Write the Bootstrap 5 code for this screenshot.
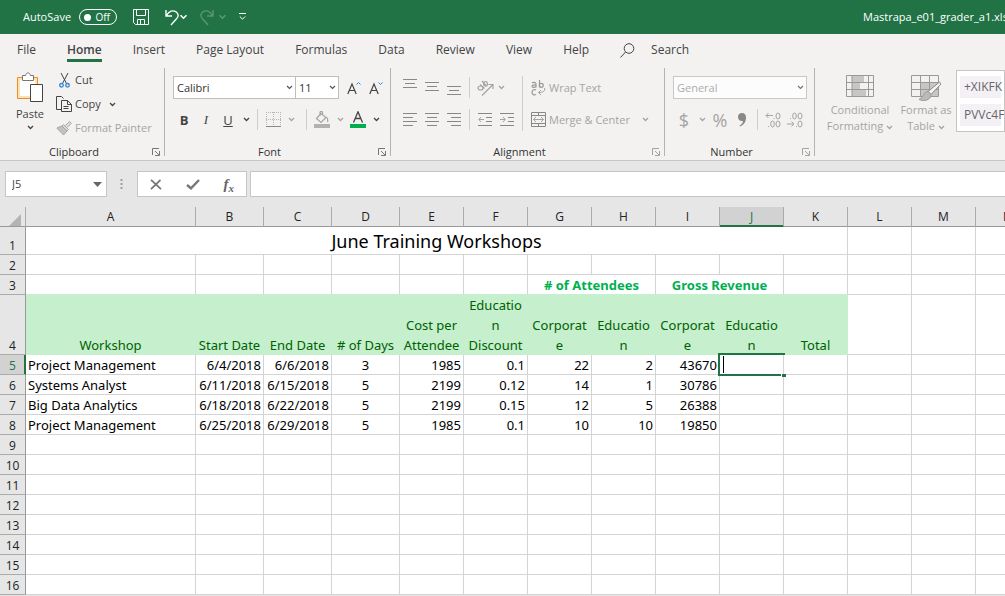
<!DOCTYPE html>
<html lang="en">
<head>
<meta charset="utf-8">
<meta name="viewport" content="width=device-width, initial-scale=1">
<title>Mastrapa_e01_grader_a1.xlsx</title>
<link href="https://cdn.jsdelivr.net/npm/bootstrap@5.3.0/dist/css/bootstrap.min.css" rel="stylesheet">
<style>
  body { font: 11px/14px "Open Sans", "Noto Sans", sans-serif; color: #444; background: #e6e6e6; }
  button { font: inherit; color: inherit; background: none; border: 0; padding: 0; }
  svg { display: block; flex: none; fill: none; stroke: currentColor; }
  .titlebar { height: 34px; background: #217346; color: #fff; padding-left: 23px; }
  .autosave { width: 38px; height: 16px; border: 1px solid #fff; border-radius: 8px; padding: 0 6px 0 4px; font-size: 10px; }
  .autosave::before { content: ""; width: 7px; height: 7px; border-radius: 50%; background: #fff; }
  .doc-title { width: 142px; white-space: nowrap; overflow: hidden; }
  .tabs { height: 34px; background: #f3f2f1; padding: 5px 0 0 17px; gap: 31px; font-size: 12px; line-height: 18px; }
  .tabs a { color: #444; text-decoration: none; border-bottom: 3px solid transparent; padding-top: 2px; }
  .tabs a.current { border-color: #217346; font-weight: 600; }
  .ribbon { height: 93px; background: #f3f2f1; border-bottom: 1px solid #c8c6c4; overflow: hidden; }
  .rgroup { flex: none; height: 92px; }
  .rule { width: 1px; flex: none; background: #b5b3b1; height: 88px; }
  .rule-in { width: 1px; flex: none; background: #cfcdcb; height: 21px; }
  .glabel { height: 16px; line-height: 16px; color: #333; }
  .launch { width: 16px; height: 16px; display: grid; place-items: center; color: #777; }
  .rrow { height: 23px; display: flex; align-items: center; }
  .rrow + .rrow { margin-top: 9px; }
  .tool { width: 22px; height: 22px; flex: none; display: grid; place-items: center; }
  .chev { height: 22px; flex: none; display: grid; place-items: center; }
  .off { color: #a6a4a2; }
  .biu { font-size: 13px; }
  .numsign { font-size: 18px; }
  .pick { height: 23px; border: 1px solid #c0bebc; border-radius: 0; padding: 0 12px 0 3px; color: #333; font-size: 11px; line-height: 20px; appearance: none;
    background: #fff url("data:image/svg+xml,%3Csvg xmlns='http://www.w3.org/2000/svg' width='7' height='5'%3E%3Cpath d='M1 1l2.5 2.5L6 1' fill='none' stroke='%23555' stroke-width='1.2'/%3E%3C/svg%3E") no-repeat right 2px center; }
  .pick:disabled { color: #999; opacity: .8; }
  .paste { width: 46px; margin-left: 7px; gap: 4px; padding-top: 4px; }
  .big { line-height: 16px; padding-top: 4px; }
  .gallery { border: 1px solid #c6c4c2; background: #fff; height: 62px; margin: 2px 0 0 1px; padding: 5px 3px; font-size: 12px; color: #666; white-space: nowrap; overflow: hidden; }
  .gallery button { display: block; width: 100%; height: 22px; background: #f4f1f6; padding-left: 4px; text-align: left; }
  .gallery button + button { margin-top: 6px; }
  .fbar { height: 46px; padding: 10px 0 10px 5px; }
  .fbox { height: 26px; border: 1px solid #c6c6c6; background: #fff; }
  .fbox input { border: 0; background: none; outline: 0; padding: 0 0 0 6px; min-width: 0; color: #444; }
  .grip { margin: 0 14px 0 13px; }
  .fx { font: italic bold 15px/20px "Liberation Serif", serif; color: #666; }
  .fx sub { font-size: 11px; }
  .formula { border-right: 0; outline: 0; border-radius: 0; margin-left: 3px; }
  .sheet { overflow: hidden; min-height: 0; }
  .cells { table-layout: fixed; border-collapse: separate; border-spacing: 0; font: 13px/17px "Noto Sans", sans-serif; color: #000; background: #fff; }
  .cells th, .cells td { padding: 2px 2px 0; height: 20px; border: 0 solid #d4d4d4; border-width: 0 1px 1px 0; vertical-align: bottom; white-space: nowrap; }
  .cells th { font: 12px/17px "Open Sans", sans-serif; text-align: center; background: #e6e6e6; border-color: #ababab; color: #222; }
  .cells thead th { border-bottom-color: #999; padding: 0; line-height: 19px; }
  .cells tbody th { border-right-color: #999; padding-left: 0; padding-right: 0; }
  .cells .here { background: #d2d2d2; color: #217346; }
  .cells thead .here { box-shadow: inset 0 -1px #217346; border-bottom-color: #217346; }
  .cells tbody .here { box-shadow: inset -1px 0 #217346; border-right-color: #217346; }
  .cells .sheet-title { height: 28px; font-size: 18px; line-height: 25px; text-align: center; }
  .cells .over td:nth-child(-n+10) { border-bottom-color: #c6efce; }
  .cells .over .grp { color: #00b050; font-weight: bold; text-align: center; }
  .cells .heads td { height: 60px; }
  .cells .heads .hd { background: #c6efce; border: 0; color: #006100; text-align: center; padding: 0 3px 0 2px; line-height: 20px; white-space: normal; overflow-wrap: anywhere; }
  .cells .num { text-align: right; }
  .cursor-cell { position: relative; }
  .cursor-cell::before { content: ""; position: absolute; inset: -2px; border: 2px solid #217346; border-right: 0; }
  .cursor-cell::after { content: ""; position: absolute; right: -3px; bottom: -3px; width: 5px; height: 3px; background: #217346; border-left: 1px solid #fff; }
  .caret { position: absolute; left: 3px; top: 1px; width: 1px; height: 17px; background: #000; }
</style>
</head>
<body class="d-flex flex-column vh-100 overflow-hidden">

<svg width="0" height="0" class="position-absolute" aria-hidden="true">
  <symbol id="chev" viewBox="0 0 7 5"><path d="M1 1l2.5 2.5L6 1" stroke-width="1.3"/></symbol>
  <symbol id="launch" viewBox="0 0 8 8"><path d="M.5 7V.5H7M3 3l4 4M7.500 3v4.500H3"/></symbol>
</svg>

<header class="titlebar d-flex align-items-center flex-shrink-0">
  <span>AutoSave</span>
  <button class="autosave d-flex align-items-center justify-content-between ms-2" aria-pressed="false">Off</button>
  <button class="ms-3" aria-label="Save"><svg width="16" height="16" viewBox="0 0 16 16"><path d="M.5.5h15v15h-13l-2-2zM3.500 .5v6h9v-6M4.500 15.500v-5h7v5M7.500 11v4"/></svg></button>
  <button class="ms-3" aria-label="Undo"><svg width="14" height="17" viewBox="0 0 14 17"><path stroke-width="1.400" d="M1 1v6h6M1.500 6.500C4 2 8 .8 11 2.800c3 2.200 2.600 5 .5 7L6 16"/></svg></button>
  <button class="chev" aria-label="Undo list"><svg width="9" height="6"><use href="#chev"/></svg></button>
  <span class="d-flex align-items-center ms-2 ps-1 opacity-25">
    <button aria-label="Redo" disabled><svg width="14" height="17" viewBox="0 0 14 17"><path stroke-width="1.400" d="M13 1v6H7M12.500 6.500C10 2 6 .8 3 2.800c-3 2.200-2.600 5-.5 7L8 16"/></svg></button>
    <button class="chev ms-1" aria-label="Redo list" disabled><svg width="9" height="6"><use href="#chev"/></svg></button>
  </span>
  <button class="ms-2 ps-1" aria-label="Customize toolbar"><svg width="7" height="8" viewBox="0 0 7 8"><path d="M0 .5h7M.8 3.500l2.700 2.700 2.700-2.700"/></svg></button>
  <span class="doc-title ms-auto">Mastrapa_e01_grader_a1.xls</span>
</header>

<nav class="tabs d-flex align-items-start flex-shrink-0">
  <a href="#">File</a><a href="#" class="current">Home</a><a href="#">Insert</a><a href="#">Page Layout</a><a href="#">Formulas</a><a href="#">Data</a><a href="#">Review</a><a href="#">View</a><a href="#">Help</a>
  <a href="#" class="d-flex align-items-center"><svg width="15" height="15" viewBox="0 0 15 15" class="me-3"><circle cx="9" cy="5.500" r="4.800"/><path d="M5.600 9L.5 14.500"/></svg>Search</a>
</nav>

<div class="ribbon d-flex flex-shrink-0">
  <section class="rgroup d-flex flex-column" style="width:164px">
    <div class="d-flex">
      <button class="paste d-flex flex-column align-items-center">
        <svg width="28" height="31" viewBox="0 0 28 31"><path d="M1.500 5.500h20v21h-20z" fill="#fbe3b0" stroke="#f08b2c"/><path d="M4 8h15v16H4z" fill="#fff" stroke="none"/><path d="M6.500 8.500v-5h3.200C9.900 0 14.100 0 14.300 3.500h3.200v5z" fill="#fff" stroke="#777"/><path d="M14.500 12.500h12v17h-12z" fill="#fff" stroke="#444"/></svg>
        <span>Paste</span>
        <svg width="7" height="5"><use href="#chev"/></svg>
      </button>
      <div class="d-flex flex-column">
        <button class="d-flex align-items-center" style="height:24px"><span class="tool"><svg width="11" height="15" viewBox="0 0 11 15"><path d="M2 0l5.500 10.500M9 0L3.500 10.500"/><g stroke="#2b88d8" stroke-width="1.300"><circle cx="2.500" cy="12.300" r="1.800"/><circle cx="8.500" cy="12.300" r="1.800"/></g></svg></span>Cut</button>
        <button class="d-flex align-items-center" style="height:24px"><span class="tool"><svg width="16" height="16" viewBox="0 0 16 16"><path d="M5 13.500H.5V.5h5l2 2M5.500 4.500h6l4 4v7h-10zM11.500 4.500v4h4M7.500 10.500h5M7.500 12.500h5"/></svg></span>Copy<svg width="7" height="5" class="ms-2"><use href="#chev"/></svg></button>
        <button class="d-flex align-items-center off" style="height:24px" disabled><span class="tool"><svg width="16" height="15" viewBox="0 0 16 15"><path d="M9.500 4.500L13.500.5l1.800 1.800-4 4M7.500 3.500l5 5-1.500 1.500-5-5z" fill="#ddd"/><path d="M6 5L.8 7l6.700 7 3.500-4z" fill="#c4c2c0"/></svg></span>Format Painter</button>
      </div>
    </div>
    <div class="glabel d-flex mt-auto"><span class="flex-fill text-center">Clipboard</span><button class="launch" aria-label="Clipboard options"><svg width="8" height="8"><use href="#launch"/></svg></button></div>
  </section>
  <div class="rule"></div>

  <section class="rgroup d-flex flex-column" style="width:225px">
    <div class="pt-2 ps-2">
      <div class="rrow">
        <select class="pick" style="width:123px" aria-label="Font"><option>Calibri</option></select><select class="pick border-start-0" style="width:43px" aria-label="Font size"><option>11</option></select>
        <button class="tool ms-1" aria-label="Grow font"><svg width="14" height="14" viewBox="0 0 14 14"><path stroke-width="1.200" d="M.8 13L5 3l4.200 10M2.300 9.500h5.400"/><path stroke="#2b88d8" d="M9.500 3.500L11.500 1.500l2 2"/></svg></button>
        <button class="tool" aria-label="Shrink font"><svg width="14" height="14" viewBox="0 0 14 14"><path stroke-width="1.200" d="M.8 13L5 3l4.200 10M2.300 9.500h5.400"/><path stroke="#2b88d8" d="M9.500 1.500l2 2 2-2"/></svg></button>
      </div>
      <div class="rrow">
        <button class="tool biu fw-bold">B</button><button class="tool biu fst-italic" style="font-family:'Liberation Serif',serif">I</button><button class="tool biu text-decoration-underline">U</button>
        <button class="chev" style="width:14px" aria-label="Underline styles"><svg width="7" height="5"><use href="#chev"/></svg></button>
        <span class="rule-in ms-1"></span>
        <span class="d-flex off ms-1"><button class="tool" aria-label="Borders" disabled><svg width="15" height="15" viewBox="0 0 15 15"><path stroke-dasharray="1 1" stroke="#b8b6b4" d="M.5 0v14M7.500 0v14M14.500 0v14M0 .5h15M0 7.500h15"/><path stroke="#888" d="M0 14.500h15"/></svg></button><button class="chev" style="width:14px" aria-label="Border styles" disabled><svg width="7" height="5"><use href="#chev"/></svg></button></span>
        <span class="rule-in ms-2"></span>
        <span class="d-flex off ms-1"><button class="tool" aria-label="Fill color" disabled><svg width="16" height="17" viewBox="0 0 16 17"><path d="M7 2.500L2.500 7.500 7 11.500l5-5zM6 5V1.500C6 0 8.500 0 8.500 1.500V4M12 6c2 1 2 3 1.500 5" stroke-width="1.200"/><path d="M0 13h16v4H0z" fill="#b3b0ad" stroke="none"/></svg></button><button class="chev" style="width:14px" aria-label="Fill colors" disabled><svg width="7" height="5"><use href="#chev"/></svg></button></span>
        <button class="tool" aria-label="Font color"><svg width="16" height="17" viewBox="0 0 16 17"><path stroke-width="1.300" d="M3.500 11.500L8 .8l4.500 10.700M5 7.500h6"/><path d="M0 13h16v4H0z" fill="#00b050" stroke="none"/></svg></button>
        <button class="chev" style="width:14px" aria-label="Font colors"><svg width="7" height="5"><use href="#chev"/></svg></button>
      </div>
    </div>
    <div class="glabel d-flex mt-auto"><span class="flex-fill text-center">Font</span><button class="launch" aria-label="Font options"><svg width="8" height="8"><use href="#launch"/></svg></button></div>
  </section>
  <div class="rule"></div>

  <section class="rgroup d-flex flex-column" style="width:273px">
    <div class="pt-2 ps-2 d-flex off">
      <div>
        <div class="rrow">
          <button class="tool" aria-label="Top align" disabled><svg width="14" height="17" viewBox="0 0 14 17"><path stroke="#888" d="M0 .5h14M2 4.500h10M0 8.500h14"/></svg></button><button class="tool" aria-label="Middle align" disabled><svg width="14" height="17" viewBox="0 0 14 17"><path stroke="#888" d="M0 3.500h14M2 7.500h10M0 11.500h14"/></svg></button><button class="tool" aria-label="Bottom align" disabled><svg width="14" height="17" viewBox="0 0 14 17"><path stroke="#888" d="M0 7.500h14M2 11.500h10M0 15.500h14"/></svg></button>
          <span class="rule-in mx-1"></span>
          <button class="tool" aria-label="Orientation" disabled><svg width="17" height="16" viewBox="0 0 17 16"><g stroke-width="1.200"><ellipse cx="3.500" cy="8" rx="2.500" ry="2"/><path d="M3 4.500l4.500 4M5 1l4 4.500"/><ellipse cx="8.500" cy="3.800" rx="2" ry="2.300"/><path d="M5 15.500L16 4.500M11.500 4.500H16V9"/></g></svg></button>
          <button class="chev" style="width:10px" aria-label="Orientation list" disabled><svg width="7" height="5"><use href="#chev"/></svg></button>
        </div>
        <div class="rrow">
          <button class="tool" aria-label="Align left" disabled><svg width="14" height="13" viewBox="0 0 14 13"><path stroke="#888" d="M0 .5h14M0 4.500h10M0 8.500h14M0 12.500h10"/></svg></button><button class="tool" aria-label="Center" disabled><svg width="14" height="13" viewBox="0 0 14 13"><path stroke="#888" d="M0 .5h14M2 4.500h10M0 8.500h14M2 12.500h10"/></svg></button><button class="tool" aria-label="Align right" disabled><svg width="14" height="13" viewBox="0 0 14 13"><path stroke="#888" d="M0 .5h14M4 4.500h10M0 8.500h14M4 12.500h10"/></svg></button>
          <span class="rule-in mx-1"></span>
          <button class="tool" aria-label="Decrease indent" disabled><svg width="14" height="13" viewBox="0 0 14 13"><path stroke="#888" d="M0 .5h14M8 4.500h6M8 8.500h6M0 12.500h14"/><path d="M6 6.500H1M3 4L.8 6.500 3 9"/></svg></button><button class="tool" aria-label="Increase indent" disabled><svg width="14" height="13" viewBox="0 0 14 13"><path stroke="#888" d="M0 .5h14M8 4.500h6M8 8.500h6M0 12.500h14"/><path d="M0 6.500h5M3 4l2.200 2.500L3 9"/></svg></button>
        </div>
      </div>
      <span class="rule-in mx-1 h-auto"></span>
      <div>
        <div class="rrow"><button class="d-flex align-items-center" disabled><span class="tool"><svg width="15" height="16" viewBox="0 0 15 16"><g stroke-width="1.200" stroke="#999"><path d="M1 3c1-1 4-1 4 1v3.500M5 5c-2-.3-4 0-4 1.300S3.500 8 5 6.500M8.500 0v7.500"/><circle cx="10.300" cy="5.300" r="2"/><path d="M5 10c-2-1-4 0-4 2.300S3 15.500 5 14.500"/></g><path d="M13.500 8c1 3-1 4.500-6 4.500M10 10l-2.500 2.500L10 15"/></svg></span>Wrap Text</button></div>
        <div class="rrow"><button class="d-flex align-items-center" disabled><span class="tool"><svg width="15" height="15" viewBox="0 0 15 15"><path stroke="#888" d="M.5.500h14v14H.5zM.5 3.500h14M.5 11.500h14M7.500 .5v3M7.500 11.500v3"/><path d="M2.500 7.500h10M5 5L2.500 7.500 5 10M10 5l2.500 2.500L10 10"/></svg></span>Merge &amp; Center</button><button class="chev ms-2 ps-1" aria-label="Merge list" disabled><svg width="7" height="5"><use href="#chev"/></svg></button></div>
      </div>
    </div>
    <div class="glabel d-flex mt-auto"><span class="flex-fill text-center">Alignment</span><button class="launch off" aria-label="Alignment options"><svg width="8" height="8"><use href="#launch"/></svg></button></div>
  </section>
  <div class="rule"></div>

  <section class="rgroup d-flex flex-column" style="width:149px">
    <div class="pt-2 ps-2 off">
      <div class="rrow"><select class="pick" style="width:134px" aria-label="Number format" disabled><option>General</option></select></div>
      <div class="rrow">
        <button class="tool numsign" aria-label="Accounting format" disabled>$</button>
        <button class="chev" style="width:14px" aria-label="Currency list" disabled><svg width="7" height="5"><use href="#chev"/></svg></button>
        <button class="tool numsign" aria-label="Percent" disabled>%</button>
        <button class="tool" aria-label="Comma style" disabled><svg width="8" height="14" viewBox="0 0 8 14"><path stroke="none" fill="#888" d="M4 0c2.500 0 4 1.700 4 4.500 0 4-2 7.500-6 9l-.5-1C3.500 11.500 4.800 10 5 8 2 8.500 0 6.500 0 4c0-2.500 1.700-4 4-4z"/></svg></button>
        <span class="rule-in mx-1"></span>
        <button class="tool" aria-label="Increase decimal" disabled><svg width="16" height="16" viewBox="0 0 16 16"><path d="M8 3.500H1M3.500 1L1 3.500 3.500 6M9 6v1M3.500 14v1"/><ellipse cx="13" cy="4" rx="2" ry="3"/><ellipse cx="7.500" cy="12" rx="1.800" ry="3"/><ellipse cx="13" cy="12" rx="2" ry="3"/></svg></button>
        <button class="tool" aria-label="Decrease decimal" disabled><svg width="16" height="16" viewBox="0 0 16 16"><path d="M0 12h7M4.500 9.500L7 12l-2.500 2.500M9.500 14v1M3.500 6v1"/><ellipse cx="13" cy="4" rx="2" ry="3"/><ellipse cx="7.500" cy="4" rx="1.800" ry="3"/><ellipse cx="13" cy="12" rx="2" ry="3"/></svg></button>
      </div>
    </div>
    <div class="glabel d-flex mt-auto"><span class="flex-fill text-center">Number</span><button class="launch off" aria-label="Number options"><svg width="8" height="8"><use href="#launch"/></svg></button></div>
  </section>
  <div class="rule"></div>

  <section class="d-flex flex-fill overflow-hidden">
    <button class="big off d-flex flex-column align-items-center ms-2 flex-shrink-0" style="width:74px" disabled>
      <svg width="28" height="30" viewBox="0 0 28 30"><path fill="#c8c6c4" stroke="none" d="M6 3h12v7H6zM6 10h8v7H6zM6 17h14v7H6z"/><path stroke="#999" d="M.5 3.500h27v21H.5zM6 3.500v21M22.500 3.500v21M.5 10.500h27M.5 17.500h27"/></svg>
      <span>Conditional<br>Formatting <svg class="d-inline-block" width="7" height="5"><use href="#chev"/></svg></span>
    </button>
    <button class="big off d-flex flex-column align-items-center flex-shrink-0" style="width:58px" disabled>
      <svg width="30" height="30" viewBox="0 0 30 30"><path fill="#c8c6c4" stroke="none" d="M10 10h18v14H10z"/><path stroke="#999" d="M.5 3.500h27v21H.5zM9.500 3.500v21M18.500 3.500v21M.5 10.500h27M.5 17.500h27"/><path d="M28.500 10L17 19.500l3 3L30 12z" fill="#f3f2f1" stroke="#888"/><path d="M17 19.500c-4 0-4 5-9 8 5 2 12 1 12-5z" fill="#bbb" stroke="#999"/></svg>
      <span>Format as<br>Table <svg class="d-inline-block" width="7" height="5"><use href="#chev"/></svg></span>
    </button>
    <div class="gallery flex-fill"><button>+XIKFK</button><button>PVVc4F</button></div>
  </section>
</div>

<div class="fbar d-flex align-items-center flex-shrink-0">
  <div class="fbox d-flex align-items-center" style="width:102px"><input class="w-100" value="J5" aria-label="Name box"><button class="px-1" aria-label="Named ranges"><svg width="9" height="5" viewBox="0 0 9 5"><path fill="#666" stroke="none" d="M0 0h9L4.500 5z"/></svg></button></div>
  <svg width="3" height="11" viewBox="0 0 3 11" class="grip"><path stroke="#a0a0a0" stroke-width="2" stroke-dasharray="2 2" d="M1.500 0v11"/></svg>
  <div class="fbox d-flex align-items-center justify-content-around" style="width:110px">
    <button aria-label="Cancel"><svg width="12" height="11" viewBox="0 0 12 11"><path stroke="#777" stroke-width="1.800" d="M1 .8l10 9.400M10.500 .8L1 10.200"/></svg></button>
    <button aria-label="Enter"><svg width="14" height="11" viewBox="0 0 14 11"><path stroke="#777" stroke-width="2.400" d="M1 6l4 3.300L13 1"/></svg></button>
    <button class="fx" aria-label="Insert function">f<sub>x</sub></button>
  </div>
  <input class="fbox formula flex-fill" aria-label="Formula bar">
</div>

<main class="sheet flex-fill">
  <table class="cells">
    <colgroup id="cols"><col style="width:26px"><col style="width:170px"><col style="width:68px"><col style="width:68px"><col style="width:68px"></colgroup>
    <thead><tr id="letters"><th aria-label="Select all"><svg width="12" height="12" class="ms-auto me-1" viewBox="0 0 12 12"><path fill="#b4b4b4" stroke="none" d="M12 0v12H0z"/></svg></th></tr></thead>
    <tbody id="rows">
      <tr><th>1</th><td colspan="11" class="sheet-title">June Training Workshops</td></tr>
      <tr><th>2</th></tr>
      <tr class="over"><th>3</th><td></td><td></td><td></td><td></td><td></td><td></td><td class="grp" colspan="2"># of Attendees</td><td class="grp" colspan="2">Gross Revenue</td><td></td></tr>
      <tr class="heads"><th>4</th><td class="hd">Workshop</td><td class="hd">Start Date</td><td class="hd">End Date</td><td class="hd"># of Days</td><td class="hd">Cost per Attendee</td><td class="hd">Education Discount</td><td class="hd">Corporate</td><td class="hd">Education</td><td class="hd">Corporate</td><td class="hd">Education</td><td class="hd">Total</td></tr>
      <tr><th class="here">5</th><td>Project Management</td><td class="num">6/4/2018</td><td class="num">6/6/2018</td><td class="text-center">3</td><td class="num">1985</td><td class="num">0.1</td><td class="num">22</td><td class="num">2</td><td class="num">43670</td><td class="cursor-cell"><span class="caret"></span></td></tr>
      <tr><th>6</th><td>Systems Analyst</td><td class="num">6/11/2018</td><td class="num">6/15/2018</td><td class="text-center">5</td><td class="num">2199</td><td class="num">0.12</td><td class="num">14</td><td class="num">1</td><td class="num">30786</td></tr>
      <tr><th>7</th><td>Big Data Analytics</td><td class="num">6/18/2018</td><td class="num">6/22/2018</td><td class="text-center">5</td><td class="num">2199</td><td class="num">0.15</td><td class="num">12</td><td class="num">5</td><td class="num">26388</td></tr>
      <tr><th>8</th><td>Project Management</td><td class="num">6/25/2018</td><td class="num">6/29/2018</td><td class="text-center">5</td><td class="num">1985</td><td class="num">0.1</td><td class="num">10</td><td class="num">10</td><td class="num">19850</td></tr>
    </tbody>
  </table>
</main>

<script src="https://cdn.jsdelivr.net/npm/bootstrap@5.3.0/dist/js/bootstrap.bundle.min.js"></script>
<script>
  // Fill the window with lettered columns and numbered rows.
  const extra = Math.max(7, Math.ceil((innerWidth - 400) / 64));
  const columns = Math.min(26, 4 + extra);
  const lastRow = Math.max(8, Math.floor((innerHeight - 355) / 20) + 4);
  const rows = document.getElementById('rows'), cols = document.getElementById('cols');
  for (let i = 0; i < columns; i++) {
    const th = document.createElement('th');
    th.textContent = String.fromCharCode(65 + i);
    if (i === 9) th.className = 'here';
    document.getElementById('letters').append(th);
    if (i > 3) {
      const col = document.createElement('col');
      col.style.width = '64px';
      cols.append(col);
    }
  }
  document.querySelector('.cells').style.width = 400 + (columns - 4) * 64 + 'px';
  for (let n = 9; n <= lastRow; n++) rows.insertRow().innerHTML = `<th>${n}</th>`;
  for (const row of rows.rows) {
    let used = [...row.cells].reduce((sum, cell) => sum + cell.colSpan, 0);
    for (; used <= columns; used++) row.insertCell();
  }
</script>
</body>
</html>
